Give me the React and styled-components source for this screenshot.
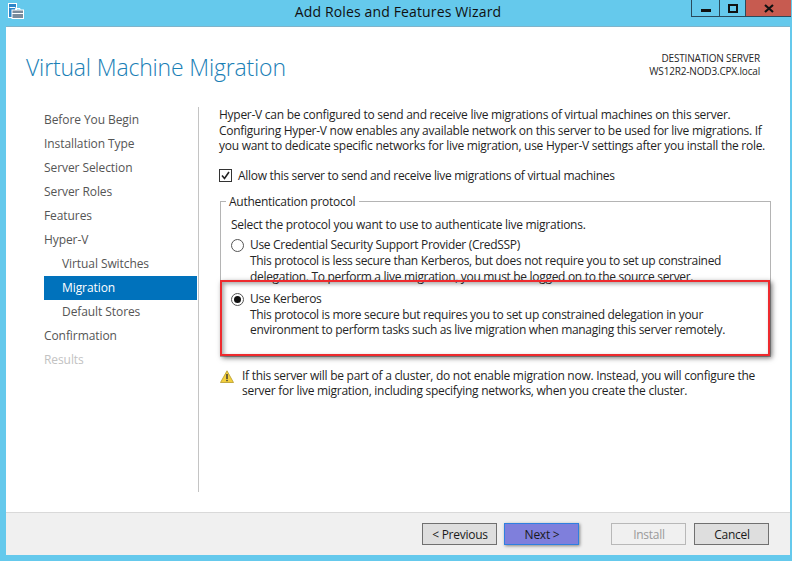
import React from 'react'
import styled, { createGlobalStyle } from 'styled-components'

const GlobalStyle = createGlobalStyle`
  html, body {
    margin: 0;
    padding: 0;
    background: #65c9ec;
  }
  body {
    font-family: 'Open Sans', 'Liberation Sans', sans-serif;
    font-size: 12px;
    color: #1f1f1f;
  }
`

const Frame = styled.div`
  width: 792px;
  height: 561px;
  display: flex;
  flex-direction: column;
  background: #65c9ec;
  overflow: hidden;
`

const TitleBar = styled.div`
  height: 26px;
  flex: none;
  display: flex;
  justify-content: space-between;
  padding: 0 1px 0 8px;
  position: relative;
  box-sizing: border-box;
`

const AppIcon = styled.svg`
  width: 16px;
  height: 16px;
  margin-top: 3px;
`

const WindowTitle = styled.div`
  position: absolute;
  left: 0;
  right: 0;
  top: 2px;
  text-align: center;
  font-size: 14px;
  line-height: 19px;
  color: #101010;
  letter-spacing: 0.14px;
  padding-left: 4px;
`

const Controls = styled.div`
  display: flex;
  height: 17px;
  z-index: 1;
`

const ControlButton = styled.div`
  width: ${({ $w }) => $w}px;
  height: 17px;
  box-sizing: border-box;
  border-left: 1px solid #2a4a5c;
  border-bottom: 1px solid #2a4a5c;
  background: ${({ $close }) => ($close ? '#c75b50' : 'transparent')};
  display: flex;
  align-items: center;
  justify-content: center;
`

const Body = styled.div`
  flex: 1;
  margin: 0 2px 6px 6px;
  background: #fff;
  border-top: 1px solid #7fb4cb;
  display: flex;
  flex-direction: column;
  min-height: 0;
`

const Header = styled.div`
  height: 80px;
  flex: none;
  display: flex;
  justify-content: space-between;
  box-sizing: border-box;
  padding: 22px 30px 0 20px;
`

const PageTitle = styled.h1`
  margin: 1px 0 0;
  font-family: 'Open Sans', sans-serif;
  font-weight: 300;
  font-size: 23px;
  line-height: 34px;
  color: #1a80b6;
  letter-spacing: -0.17px;
`

const ServerInfo = styled.div`
  text-align: right;
  font-size: 10px;
  line-height: 13px;
  margin-top: 3px;
  color: #262626;
  letter-spacing: -0.17px;
`

const Main = styled.div`
  flex: 1;
  display: flex;
  min-height: 0;
`

const Sidebar = styled.nav`
  width: 154px;
  margin-left: 38px;
  flex: none;
  display: flex;
  flex-direction: column;
  border-right: 1px solid #c4c4c4;
  height: 384px;
  box-sizing: content-box;
  padding-top: 1px;
`

const NavItem = styled.div`
  height: 24px;
  line-height: 24px;
  flex: none;
  margin-right: 1px;
  padding-left: ${({ $sub }) => ($sub ? 18 : 0)}px;
  letter-spacing: -0.08px;
  background: ${({ $active }) => ($active ? '#0072bc' : 'transparent')};
  color: ${({ $active, $off }) => ($active ? '#fff' : $off ? '#c2c2c2' : '#555')};
`

const Content = styled.div`
  padding: 0 0 0 20px;
  width: 551px;
  flex: none;
  letter-spacing: -0.27px;
  line-height: 15.6px;
  white-space: nowrap;
`

const Intro = styled.p`
  margin: 0;
`

const CheckRow = styled.label`
  display: flex;
  align-items: center;
  gap: 6px;
  margin-top: 14px;
  height: 16px;
  letter-spacing: -0.3px;
`

const CheckBox = styled.span`
  width: 11px;
  height: 11px;
  border: 1px solid #333;
  display: flex;
  align-items: center;
  justify-content: center;
  background: #fff;
`

const Group = styled.div`
  position: relative;
  margin: 17px 0 0 1px;
  padding: 15px 0 0 10px;
  width: 539px;
  height: 139px;
  border: 1px solid #b4b4b4;
`

const GroupLegend = styled.div`
  position: absolute;
  left: 5px;
  top: -8px;
  padding: 0 4px 0 3px;
  background: #fff;
  line-height: 15px;
`

const GroupLead = styled.div`
  margin-bottom: 5px;
`

const Option = styled.div`
  display: flex;
  gap: 6px;
  margin-bottom: ${({ $gap }) => $gap}px;
`

const Radio = styled.span`
  width: 11px;
  height: 11px;
  margin-top: 2px;
  flex: none;
  border: 1px solid #555;
  border-radius: 50%;
  background: #fff;
  display: flex;
  align-items: center;
  justify-content: center;
  &::after {
    content: '';
    width: 7px;
    height: 7px;
    border-radius: 50%;
    background: ${({ $on }) => ($on ? '#111' : 'transparent')};
  }
`

const OptionText = styled.div`
  color: #262626;
  letter-spacing: -0.31px;
`

const Highlight = styled.div`
  position: absolute;
  left: -1px;
  top: 78px;
  width: 546px;
  height: 72px;
  border: 2px solid #ee2a2e;
  pointer-events: none;
  box-shadow: 2px 2px 5px rgba(0, 0, 0, 0.55), inset 2px 2px 4px rgba(0, 0, 0, 0.35);
`

const Warning = styled.div`
  display: flex;
  gap: 8px;
  margin-top: 11px;
  padding-left: 1px;
`

const WarnIcon = styled.svg`
  width: 14px;
  height: 13px;
  flex: none;
  margin-top: 2px;
`

const Footer = styled.div`
  height: 43px;
  flex: none;
  margin-top: auto;
  background: #f0f0f0;
  border-top: 1px solid #d9d9d9;
  display: flex;
  align-items: flex-start;
  padding: 10px 0 0 416px;
  box-sizing: border-box;
`

const WizardButton = styled.div`
  width: 75px;
  height: 22px;
  box-sizing: border-box;
  margin-left: ${({ $ml }) => $ml || 0}px;
  display: flex;
  align-items: center;
  justify-content: center;
  border: 1px solid ${({ $primary, $off }) => ($primary ? '#2f7fe0' : $off ? '#b8b8b8' : '#707070')};
  background: ${({ $primary, $off }) => ($primary ? '#7f7fdc' : $off ? '#f0f0f0' : '#dedede')};
  color: ${({ $off }) => ($off ? '#9a9a9a' : '#1a1a1a')};
  letter-spacing: -0.25px;
  padding-left: 1px;
  box-shadow: ${({ $primary }) => ($primary ? '1px 1px 3px rgba(0,0,0,0.45)' : 'none')};
`

const nav = [
  { label: 'Before You Begin' },
  { label: 'Installation Type' },
  { label: 'Server Selection' },
  { label: 'Server Roles' },
  { label: 'Features' },
  { label: 'Hyper-V' },
  { label: 'Virtual Switches', sub: true },
  { label: 'Migration', sub: true, active: true },
  { label: 'Default Stores', sub: true },
  { label: 'Confirmation' },
  { label: 'Results', off: true },
]

export default function App() {
  return (
    <Frame>
      <GlobalStyle />
      <TitleBar>
        <AppIcon viewBox="0 0 16 16">
          <rect x="0.5" y="0.5" width="8" height="14" fill="#2c86c9" stroke="#fff" />
          <rect x="1.5" y="4" width="6" height="1" fill="#fff" />
          <rect x="4" y="7" width="11.5" height="8.5" fill="#7a8b9c" stroke="#fff" />
          <path d="M7.5 7V5.5h4.5V7" fill="none" stroke="#fff" />
          <rect x="4" y="10" width="11" height="1" fill="#fff" />
        </AppIcon>
        <WindowTitle>Add Roles and Features Wizard</WindowTitle>
        <Controls>
          <ControlButton $w={28}>
            <svg width="10" height="10" viewBox="0 0 10 10"><rect x="0" y="6" width="10" height="3" fill="#111" /></svg>
          </ControlButton>
          <ControlButton $w={26}>
            <svg width="10" height="9" viewBox="0 0 10 9"><rect x="1" y="1" width="8" height="7" fill="none" stroke="#111" strokeWidth="2" /></svg>
          </ControlButton>
          <ControlButton $w={46} $close>
            <svg width="10" height="9" viewBox="0 0 10 9"><path d="M1 1l8 7M9 1L1 8" stroke="#111" strokeWidth="2.2" fill="none" /></svg>
          </ControlButton>
        </Controls>
      </TitleBar>
      <Body>
        <Header>
          <PageTitle>Virtual Machine Migration</PageTitle>
          <ServerInfo>
            DESTINATION SERVER
            <br />
            WS12R2-NOD3.CPX.local
          </ServerInfo>
        </Header>
        <Main>
          <Sidebar>
            {nav.map((item) => (
              <NavItem key={item.label} $sub={item.sub} $active={item.active} $off={item.off}>
                {item.label}
              </NavItem>
            ))}
          </Sidebar>
          <Content>
            <Intro>
              Hyper-V can be configured to send and receive live migrations of virtual machines on this server.
              <br />
              Configuring Hyper-V now enables any available network on this server to be used for live migrations. If
              <br />
              you want to dedicate specific networks for live migration, use Hyper-V settings after you install the role.
            </Intro>
            <CheckRow>
              <CheckBox>
                <svg width="9" height="9" viewBox="0 0 9 9"><path d="M1 4.5l2.5 3L8 1" fill="none" stroke="#222" strokeWidth="1.6" /></svg>
              </CheckBox>
              Allow this server to send and receive live migrations of virtual machines
            </CheckRow>
            <Group>
              <GroupLegend>Authentication protocol</GroupLegend>
              <GroupLead>Select the protocol you want to use to authenticate live migrations.</GroupLead>
              <Option $gap={7}>
                <Radio />
                <OptionText>
                  Use Credential Security Support Provider (CredSSP)
                  <br />
                  This protocol is less secure than Kerberos, but does not require you to set up constrained
                  <br />
                  delegation. To perform a live migration, you must be logged on to the source server.
                </OptionText>
              </Option>
              <Option $gap={0}>
                <Radio $on />
                <OptionText>
                  Use Kerberos
                  <br />
                  This protocol is more secure but requires you to set up constrained delegation in your
                  <br />
                  environment to perform tasks such as live migration when managing this server remotely.
                </OptionText>
              </Option>
              <Highlight />
            </Group>
            <Warning>
              <WarnIcon viewBox="0 0 14 13">
                <path d="M7 0.8L13.5 12.5H0.5Z" fill="#f3cf3d" stroke="#b59a2a" strokeWidth="0.8" />
                <rect x="6.3" y="4" width="1.4" height="5" fill="#333" />
                <rect x="6.3" y="9.8" width="1.4" height="1.4" fill="#333" />
              </WarnIcon>
              <div>
                If this server will be part of a cluster, do not enable migration now. Instead, you will configure the
                <br />
                server for live migration, including specifying networks, when you create the cluster.
              </div>
            </Warning>
          </Content>
        </Main>
        <Footer>
          <WizardButton>&lt; Previous</WizardButton>
          <WizardButton $primary $ml={7}>Next &gt;</WizardButton>
          <WizardButton $off $ml={32}>Install</WizardButton>
          <WizardButton $ml={8}>Cancel</WizardButton>
        </Footer>
      </Body>
    </Frame>
  )
}
